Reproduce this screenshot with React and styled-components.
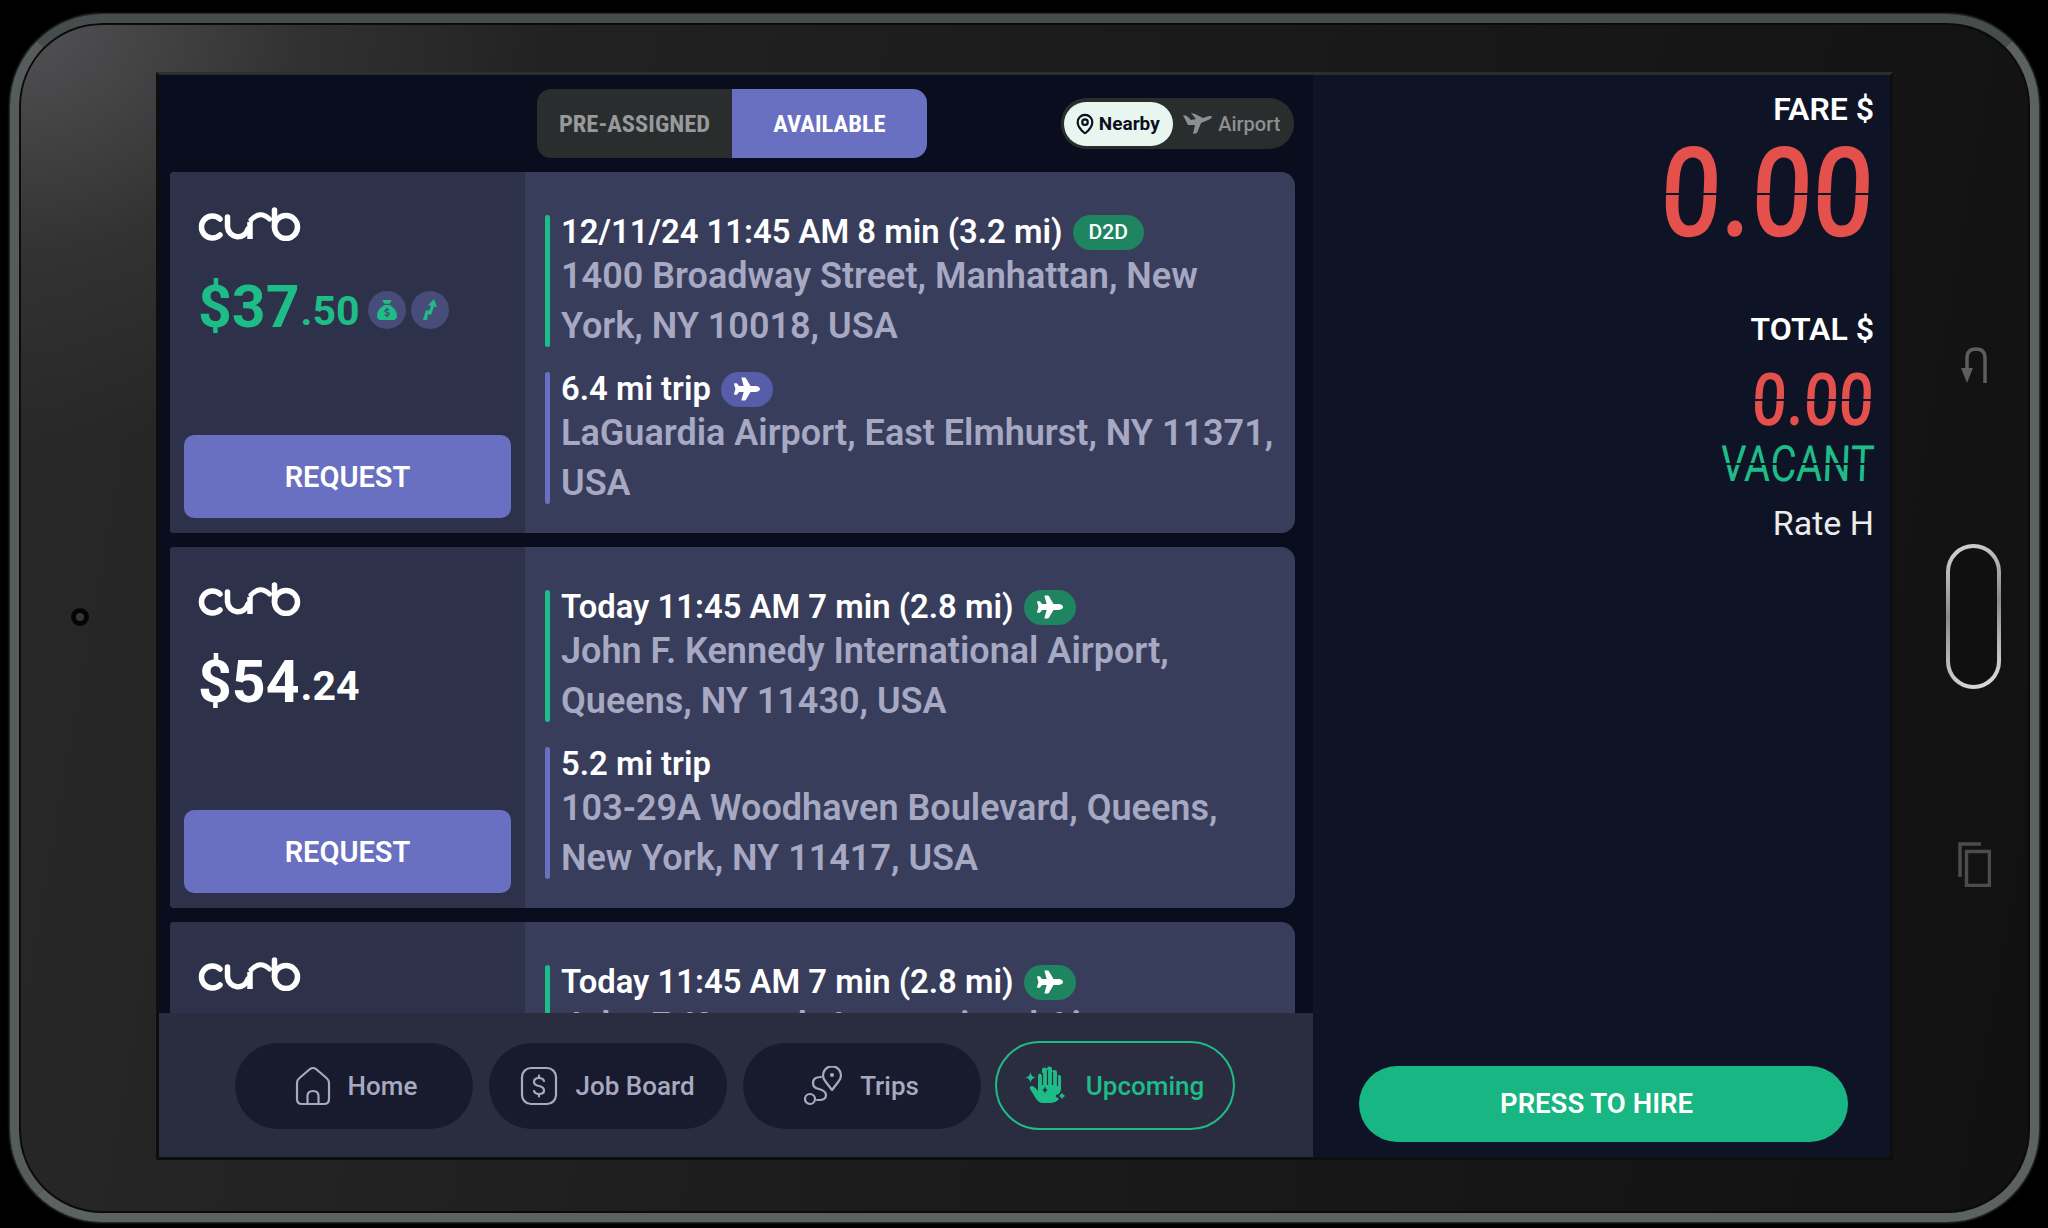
import React from 'react';
import styled, { createGlobalStyle } from 'styled-components';
import { FaPlane, FaSackDollar } from 'react-icons/fa6';
import { MapPin } from 'lucide-react';

const GlobalStyle = createGlobalStyle`
  html, body {
    margin: 0;
    padding: 0;
    background: #000;
  }
  body {
    width: 2048px;
    height: 1228px;
    overflow: hidden;
    font-family: Roboto, "Liberation Sans", sans-serif;
  }
  * {
    box-sizing: border-box;
  }
`;

const Tablet = styled.div`
  width: 2029px;
  height: 1208px;
  margin: 14px 0 0 10px;
  display: flex;
  border: 9px solid #5c6262;
  border-top-color: #474c4c;
  border-left-color: #565b5b;
  border-radius: 92px;
  box-shadow: 0 0 2px 1px #33383a, inset 0 0 0 2px #0b0b0b;
  background:
    radial-gradient(ellipse 520px 420px at 0 0, #525254 0%, rgba(60, 60, 62, 0.5) 55%, transparent 100%),
    linear-gradient(100deg, #292929 0%, #1c1c1c 45%, #111 100%);
`;

const LeftGutter = styled.div`
  width: 137px;
  display: flex;
  align-items: center;
  justify-content: center;
  padding: 0 15px 3px 0;
`;

const Camera = styled.div`
  width: 18px;
  height: 18px;
  border-radius: 50%;
  background: #33393a;
  border: 5px solid #050505;
`;

const RightGutter = styled.div`
  flex: 1;
  display: flex;
  flex-direction: column;
  align-items: center;
  padding: 324px 0 0 24px;
`;

const BackIcon = styled.svg`
  width: 28px;
  height: 37px;
`;

const HomeButton = styled.div`
  width: 55px;
  height: 145px;
  margin: 160px 0 153px;
  border: 4px solid transparent;
  border-radius: 28px;
  background:
    linear-gradient(#101011, #101011) padding-box,
    linear-gradient(160deg, #d8d8d8, #8a8a8a 45%, #bdbdbd 75%, #e0e0e0) border-box;
`;

const RecentsIcon = styled.svg`
  width: 34px;
  height: 45px;
`;

const Screen = styled.div`
  width: 1737px;
  height: 1088px;
  margin-top: 49px;
  display: flex;
  border: 3px solid #0d0e0e;
  border-top-color: #2c2e2c;
  background: #0e1325;
`;

const LeftColumn = styled.div`
  width: 1154px;
  display: flex;
  flex-direction: column;
  background: #0a0d1e;
`;

const Header = styled.div`
  height: 97px;
  flex: none;
  display: flex;
  align-items: flex-start;
  justify-content: space-between;
  padding: 14px 19px 0 378px;
`;

const Tabs = styled.div`
  display: flex;
  height: 69px;
  border-radius: 14px;
  overflow: hidden;
`;

const Tab = styled.div`
  width: 195px;
  display: flex;
  align-items: center;
  justify-content: center;
  background: ${props => props.$active ? '#6a70c1' : '#2a2d2d'};
  color: ${props => props.$active ? '#fff' : '#98999c'};
  font-size: 24.5px;
  font-weight: 700;
  font-stretch: 75%;
`;

const Toggle = styled.div`
  width: 233px;
  height: 51px;
  margin-top: 9px;
  padding: 3px;
  display: flex;
  align-items: center;
  border-radius: 25px;
  background: #2a2d2d;
`;

const ToggleItem = styled.div`
  height: 44px;
  width: ${props => props.$active ? 110 : 120}px;
  display: flex;
  align-items: center;
  justify-content: center;
  gap: ${props => props.$active ? 3 : 6}px;
  padding-right: ${props => props.$active ? 3 : 0}px;
  border-radius: 22px;
  background: ${props => props.$active ? '#e8f6f0' : 'transparent'};
  color: ${props => props.$active ? '#0b1020' : '#8e8f92'};
  font-size: ${props => props.$active ? 19 : 20}px;
  font-weight: ${props => props.$active ? 700 : 500};
`;

const List = styled.div`
  flex: 1;
  min-height: 0;
  overflow: hidden;
  padding: 0 18px 0 11px;
  display: flex;
  flex-direction: column;
  gap: 14px;
`;

const Card = styled.div`
  flex: none;
  height: 361px;
  display: flex;
  border-radius: 4px 14px 14px 4px;
  overflow: hidden;
  background: #383d5c;
`;

const CardSide = styled.div`
  width: 355px;
  flex: none;
  display: flex;
  flex-direction: column;
  padding: 35px 14px 15px 14px;
  background: #2d3149;
`;

const Logo = styled.svg`
  width: 104px;
  height: 34px;
  margin-left: 14px;
  flex: none;
`;

const PriceRow = styled.div`
  display: flex;
  align-items: center;
  margin: 36px 0 0 14px;
  height: 60px;
  color: ${props => props.$highlight ? '#1ebc87' : '#fff'};
  font-weight: 700;
`;

const Dollars = styled.span`
  font-size: 59px;
  line-height: 60px;
`;

const Cents = styled.span`
  font-size: 41px;
  line-height: 60px;
  margin: 8px 8px 0 1px;
`;

const Perk = styled.div`
  width: 38px;
  height: 38px;
  margin: 6px 5px 0 0;
  display: flex;
  align-items: center;
  justify-content: center;
  border-radius: 50%;
  background: #484c78;
  color: #1ebc87;
  font-size: 20px;
`;

const RequestButton = styled.div`
  height: 83px;
  margin-top: auto;
  display: flex;
  align-items: center;
  justify-content: center;
  border-radius: 10px;
  background: #6a70c1;
  color: #fff;
  font-size: 29px;
  font-weight: 600;
`;

const CardBody = styled.div`
  flex: 1;
  padding: 43px 18px 0 20px;
  display: flex;
  flex-direction: column;
  gap: 22px;
`;

const Stop = styled.div`
  height: 135px;
  flex: none;
  display: flex;
  gap: 11px;
`;

const StopBar = styled.div`
  width: 5px;
  height: 132px;
  flex: none;
  border-radius: 3px;
  background: ${props => props.$color};
`;

const StopText = styled.div`
  flex: 1;
  min-width: 0;
`;

const StopTitle = styled.div`
  height: 34px;
  margin-bottom: 2px;
  display: flex;
  align-items: center;
  gap: 10px;
  color: #fff;
  font-size: 32.8px;
  font-weight: 600;
  white-space: nowrap;
`;

const Address = styled.div`
  color: #a7a8c2;
  font-size: 36px;
  line-height: 50px;
  font-weight: 600;
`;

const Chip = styled.div`
  height: 35px;
  padding: 0 ${props => props.$text ? 16 : 13}px;
  display: flex;
  align-items: center;
  border-radius: 18px;
  background: ${props => props.$color};
  color: #fff;
  font-size: ${props => props.$text ? 21 : 26}px;
  font-weight: 500;
`;

const Nav = styled.div`
  height: 144px;
  flex: none;
  display: flex;
  align-items: center;
  justify-content: center;
  gap: 16px;
  position: relative;
  background: #2a2d40;
  padding: 1px 3px 0 0;
`;

const NavPill = styled.div`
  width: ${props => props.$active ? 240 : 238}px;
  height: ${props => props.$active ? 89 : 86}px;
  margin-left: ${props => props.$active ? -2 : 0}px;
  padding-left: ${props => props.$inset || 0}px;
  display: flex;
  align-items: center;
  justify-content: center;
  gap: 17px;
  border-radius: 45px;
  background: ${props => props.$active ? 'transparent' : '#181b2e'};
  border: ${props => props.$active ? '2px solid #1ebc87' : 'none'};
  color: ${props => props.$active ? '#1ebc87' : '#a9a9c2'};
  font-size: 26px;
  font-weight: 500;
`;

const NavIcon = styled.svg`
  width: ${props => props.$w}px;
  height: 40px;
  flex: none;
  fill: none;
  stroke: #a9a9c2;
  stroke-width: 2.2;
  stroke-linecap: round;
  stroke-linejoin: round;
`;

const RightColumn = styled.div`
  flex: 1;
  position: relative;
  display: flex;
  flex-direction: column;
  align-items: flex-end;
  padding: 14px 16px 15px 0;
  color: #fff;
`;

const MeterLabel = styled.div`
  font-size: 32px;
  line-height: 40px;
  font-weight: 600;
  margin-top: ${props => props.$top}px;
`;

const Digital = styled.div`
  position: relative;
  margin-top: ${props => props.$top}px;
  height: ${props => props.$height}px;
  line-height: ${props => props.$height}px;
  font-size: ${props => props.$size}px;
  font-weight: ${props => props.$weight};
  color: ${props => props.$color};
  white-space: nowrap;
  transform: scaleX(${props => props.$squeeze}) skewX(-3deg);
  transform-origin: right center;

  &::after {
    content: '';
    position: absolute;
    left: 0;
    right: 0;
    top: 50%;
    height: 2px;
    margin-top: -1px;
    background: #0e1325;
  }
`;

const RateLabel = styled.div`
  margin-top: 21px;
  font-size: 34px;
  line-height: 40px;
  color: #ececec;
`;

const HireButton = styled.div`
  width: 489px;
  height: 76px;
  margin: auto 26px 0 0;
  padding: 0 14px 2px 0;
  display: flex;
  align-items: center;
  justify-content: center;
  border-radius: 38px;
  background: #17b682;
  color: #fff;
  font-size: 27.5px;
  font-weight: 600;
`;

const CurbLogo = () => (
  <Logo viewBox="0 0 104 34" fill="none" stroke="#fff" strokeWidth="5.5" strokeLinecap="round">
    <path d="M22 12 A11 11 0 1 0 22 28" />
    <path d="M29.5 10 V20 A10.5 11 0 0 0 50 22" />
    <path d="M52 32 V15" strokeLinecap="butt" />
    <path d="M53 13 Q62 3 71.5 12" strokeWidth="5" />
    <path d="M76.5 3 V20" />
    <circle cx="88" cy="20" r="11.5" />
  </Logo>
);

const Surge = () => (
  <svg width="18" height="22" viewBox="0 0 18 22" fill="#1ebc87">
    <path d="M2 21 L5 11 L8 12 L10 7 L7 6 L13 0 L16 8 L13 7.5 L10 16 L7 15 L6 21 Z" />
  </svg>
);

const AirportPlane = () => (
  <svg width="29" height="23" viewBox="0 0 29 23" fill="#8e8f92">
    <path d="M0 3 L4 4 L8 8 L13 7 L8 1 L12 2 L20 6 L26 4 Q29 3.5 29 5 Q28 7 25 8 L18 11 L14 21 L10 22 L12 13 L5 13 Z" />
  </svg>
);

const HomeIcon = () => (
  <NavIcon $w={36} viewBox="0 0 36 40">
    <path d="M2 17 Q2 14 4.5 12 L15 3 Q18 1 21 3 L31.5 12 Q34 14 34 17 V33 Q34 38 29 38 H7 Q2 38 2 33 Z" />
    <path d="M12.5 38 V30 Q12.5 25 18 25 Q23.5 25 23.5 30 V38" />
  </NavIcon>
);

const BoardIcon = () => (
  <NavIcon $w={38} viewBox="0 0 38 40">
    <rect x="2" y="2" width="34" height="36" rx="9" />
    <path d="M24 15 Q23 12 19 12 Q14 12 14 16 Q14 19 19 20 Q24 21 24 24.5 Q24 28 19 28 Q15 28 14 25" />
    <path d="M19 9.5 V12 M19 28 V30.5" />
  </NavIcon>
);

const TripsIcon = () => (
  <NavIcon $w={39} viewBox="0 0 39 40">
    <circle cx="6" cy="33" r="5" />
    <path d="M17 11 Q9 11 9 17 Q9 22 15 23 Q22 25 22 29 Q22 34 15 34 H13" />
    <path d="M28 24 L21.5 15.5 A9 9 0 1 1 34.5 15.5 Z" />
    <circle cx="28" cy="9" r="1" />
  </NavIcon>
);

const HandIcon = () => (
  <svg width="44" height="40" viewBox="0 0 44 40" fill="#1ebc87">
    <path d="M5.5 6 Q6 11 11 11.5 Q6 12 5.5 17 Q5 12 0 11.5 Q5 11 5.5 6 Z" />
    <path d="M13 22 V10 Q13 7.5 15 7.5 Q17 7.5 17 10 V4 Q17 1.5 19.5 1.5 Q22 1.5 22 4 V3 Q22 0.5 24.5 0.5 Q27 0.5 27 3 V6 Q27 4 29.5 4 Q32 4 32 6 V11 Q32 9 34 9 Q36 9 36 11 V26 Q35 37 26 37 H18 Q13 37 10 31 L5 23 Q4 20 7 20 Q9 20 13 25 Z" />
    <path d="M17.5 7 V19 M22.5 4 V19 M27.5 6 V19 M32.5 10 V20" stroke="#2a2d40" strokeWidth="1.2" fill="none" />
    <path d="M37 23 Q37.5 29 43 30 Q37.5 31 37 37 Q36.5 31 31 30 Q36.5 29 37 23 Z" stroke="#2a2d40" strokeWidth="2" />
    <path d="M20 20 Q20.3 23.5 23 24 Q20.3 24.5 20 28 Q19.7 24.5 17 24 Q19.7 23.5 20 20 Z" fill="#2a2d40" />
  </svg>
);

const trips = [
  {
    id: 1,
    dollars: '$37',
    cents: '.50',
    highlight: true,
    pickupTitle: '12/11/24 11:45 AM 8 min (3.2 mi)',
    pickupChip: <Chip $text $color="#1e8560">D2D</Chip>,
    pickup: '1400 Broadway Street, Manhattan, New York, NY 10018, USA',
    dropTitle: '6.4 mi trip',
    dropChip: <Chip $color="#575da8"><FaPlane /></Chip>,
    drop: 'LaGuardia Airport, East Elmhurst, NY 11371, USA',
  },
  {
    id: 2,
    dollars: '$54',
    cents: '.24',
    pickupTitle: 'Today 11:45 AM 7 min (2.8 mi)',
    pickupChip: <Chip $color="#1e8560"><FaPlane /></Chip>,
    pickup: 'John F. Kennedy International Airport, Queens, NY 11430, USA',
    dropTitle: '5.2 mi trip',
    drop: '103-29A Woodhaven Boulevard, Queens, New York, NY 11417, USA',
  },
  {
    id: 3,
    dollars: '$54',
    cents: '.24',
    pickupTitle: 'Today 11:45 AM 7 min (2.8 mi)',
    pickupChip: <Chip $color="#1e8560"><FaPlane /></Chip>,
    pickup: 'John F. Kennedy International Airport, Queens, NY 11430, USA',
    dropTitle: '5.2 mi trip',
    drop: '103-29A Woodhaven Boulevard, Queens, New York, NY 11417, USA',
  },
];

const TripCard = ({ trip }) => (
  <Card>
    <CardSide>
      <CurbLogo />
      <PriceRow $highlight={trip.highlight}>
        <Dollars>{trip.dollars}</Dollars>
        <Cents>{trip.cents}</Cents>
        {trip.highlight && <Perk><FaSackDollar /></Perk>}
        {trip.highlight && <Perk><Surge /></Perk>}
      </PriceRow>
      <RequestButton>REQUEST</RequestButton>
    </CardSide>
    <CardBody>
      <Stop>
        <StopBar $color="#1ebc87" />
        <StopText>
          <StopTitle>{trip.pickupTitle}{trip.pickupChip}</StopTitle>
          <Address>{trip.pickup}</Address>
        </StopText>
      </Stop>
      <Stop>
        <StopBar $color="#6a70c1" />
        <StopText>
          <StopTitle>{trip.dropTitle}{trip.dropChip}</StopTitle>
          <Address>{trip.drop}</Address>
        </StopText>
      </Stop>
    </CardBody>
  </Card>
);

const App = () => (
  <>
    <GlobalStyle />
    <Tablet>
      <LeftGutter>
        <Camera />
      </LeftGutter>
      <Screen>
        <LeftColumn>
          <Header>
            <Tabs>
              <Tab>PRE-ASSIGNED</Tab>
              <Tab $active>AVAILABLE</Tab>
            </Tabs>
            <Toggle>
              <ToggleItem $active><MapPin size={22} strokeWidth={2.4} />Nearby</ToggleItem>
              <ToggleItem><AirportPlane />Airport</ToggleItem>
            </Toggle>
          </Header>
          <List>
            {trips.map(trip => <TripCard key={trip.id} trip={trip} />)}
          </List>
          <Nav>
            <NavPill $inset={5}><HomeIcon />Home</NavPill>
            <NavPill><BoardIcon />Job Board</NavPill>
            <NavPill><TripsIcon />Trips</NavPill>
            <NavPill $active><HandIcon />Upcoming</NavPill>
          </Nav>
        </LeftColumn>
        <RightColumn>
          <MeterLabel>FARE $</MeterLabel>
          <Digital $top={20} $height={89} $size={125} $weight={500} $squeeze={0.86} $color="#e4504c">0.00</Digital>
          <MeterLabel $top={71}>TOTAL $</MeterLabel>
          <Digital $top={25} $height={52} $size={73} $weight={500} $squeeze={0.84} $color="#e4504c">0.00</Digital>
          <Digital $top={20} $height={36} $size={50} $weight={400} $squeeze={0.8} $color="#1ebc87">VACANT</Digital>
          <RateLabel>Rate H</RateLabel>
          <HireButton>PRESS TO HIRE</HireButton>
        </RightColumn>
      </Screen>
      <RightGutter>
        <BackIcon viewBox="0 0 28 37" fill="none">
          <path d="M25 36 V11 Q25 2 16 2 Q7 2 7 11 V22" stroke="#5e5e60" strokeWidth="3.5" />
          <path d="M1 21 H13 L7 36 Z" fill="#5e5e60" />
        </BackIcon>
        <HomeButton />
        <RecentsIcon viewBox="0 0 34 45" fill="none" stroke="#4c4c4e" strokeWidth="3.5">
          <path d="M3 35 V2 H24" />
          <rect x="9.5" y="9.5" width="23" height="34" />
        </RecentsIcon>
      </RightGutter>
    </Tablet>
  </>
);

export default App;
